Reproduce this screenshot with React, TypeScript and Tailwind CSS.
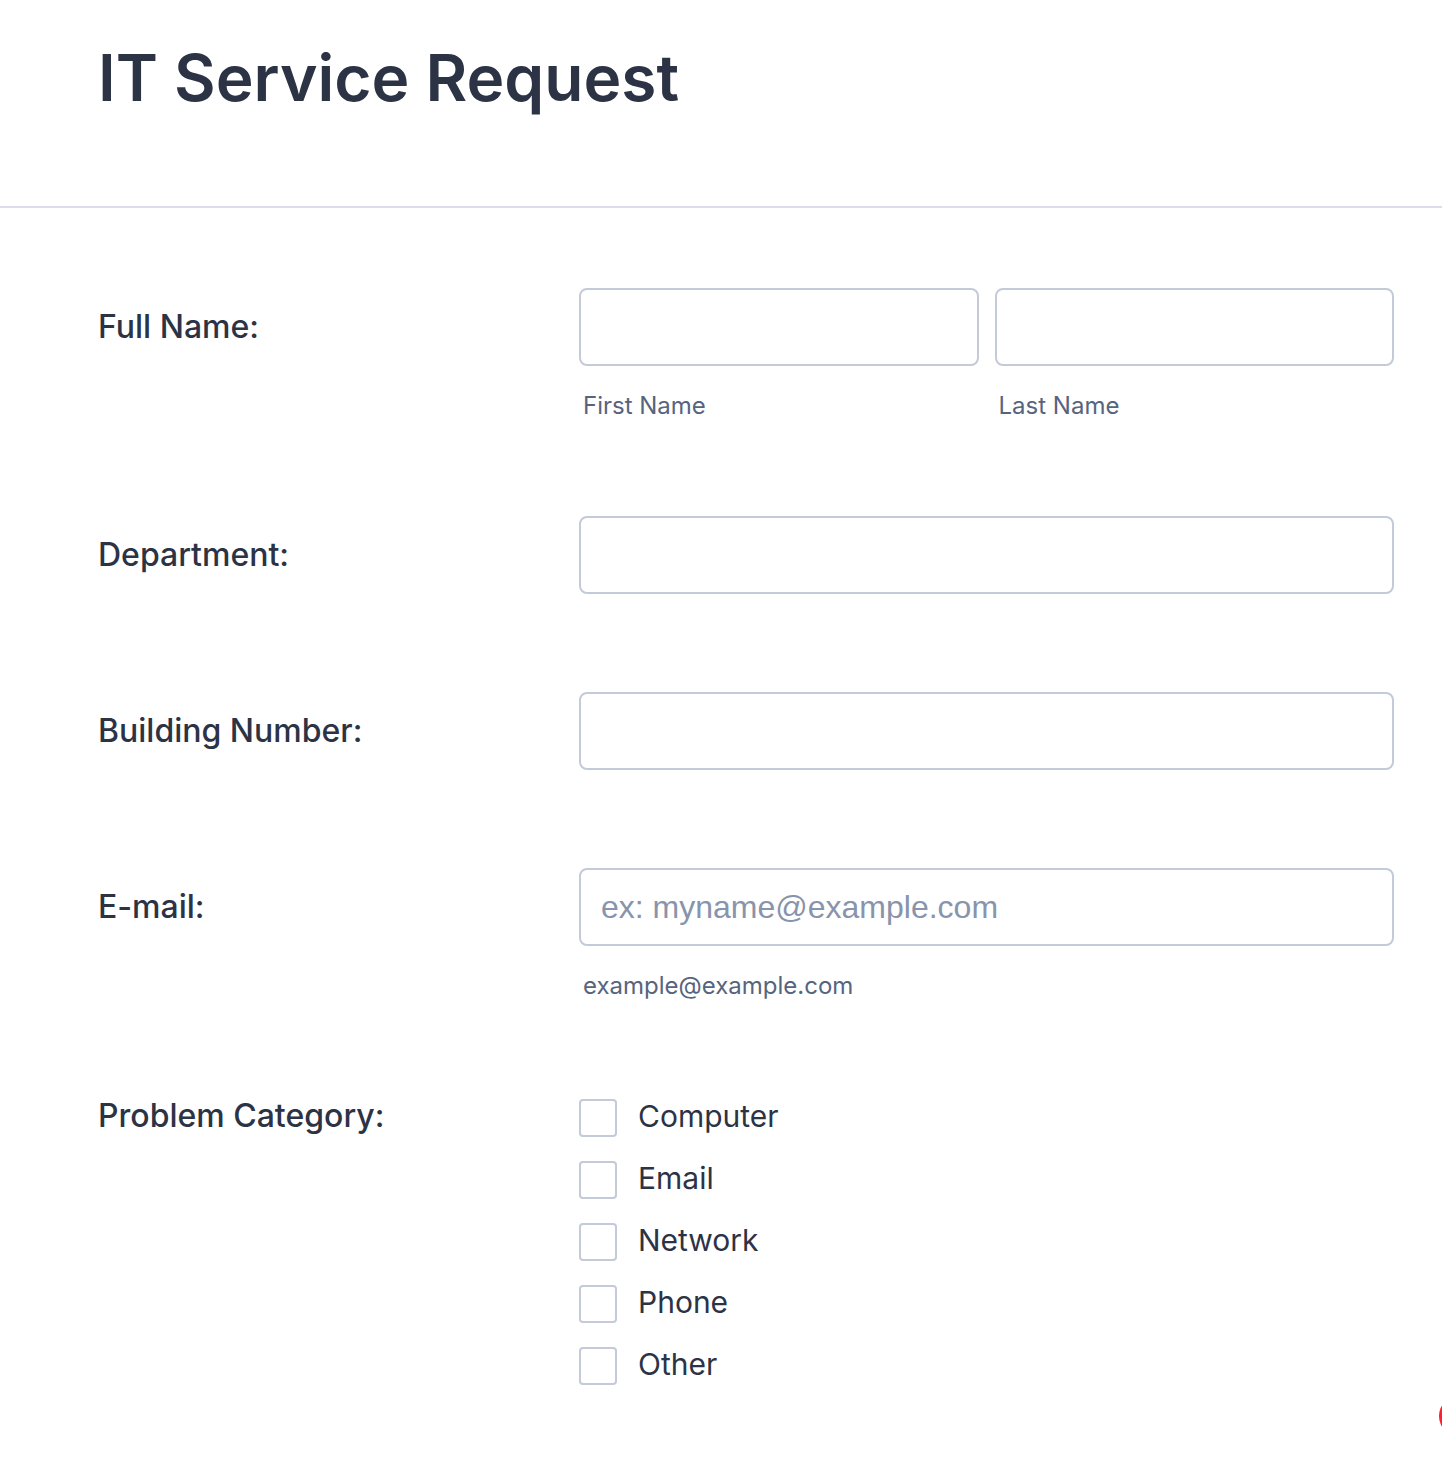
import React from "react";

const inter = { fontFamily: "Inter, 'Noto Sans', sans-serif" };

function Label({ children, h = "h-[78px]" }: { children: React.ReactNode; h?: string }) {
  return (
    <div className={`w-[481px] shrink-0 flex items-center ${h} text-[32px] font-medium text-[#2c3345]`}>
      {children}
    </div>
  );
}

function Input({ placeholder }: { placeholder?: string }) {
  return (
    <input
      placeholder={placeholder}
      className="w-full h-[78px] rounded-[8px] border-2 border-[#c3cad8] bg-white px-[20px] text-[32px] text-[#2c3345] placeholder:text-[#8894ab] outline-none"
      style={{ fontFamily: "'Liberation Sans', Arial, sans-serif" }}
    />
  );
}

function Sub({ children }: { children: React.ReactNode }) {
  return <div className="mt-[25px] h-[27px] leading-[30px] pl-[4px] text-[24px] text-[#57647e]">{children}</div>;
}

export default function App() {
  const cats = ["Computer", "Email", "Network", "Phone", "Other"];
  return (
    <div className="relative min-h-[1476px] w-full bg-white overflow-hidden" style={inter}>
      <header className="px-[98px] pt-[38px] pb-[88px]">
        <h1 className="text-[64px] leading-[80px] font-semibold text-[#2c3345] tracking-[0px]">IT Service Request</h1>
      </header>
      <div className="h-[2px] bg-[#dcdde9]" />
      <div className="pl-[98px] pr-[48px] pt-[80px] flex flex-col gap-[98px]">
        <div className="flex">
          <Label>Full Name:</Label>
          <div className="flex-1 flex gap-[16px]">
            <div className="flex-1">
              <Input />
              <Sub>First Name</Sub>
            </div>
            <div className="flex-1">
              <Input />
              <Sub>Last Name</Sub>
            </div>
          </div>
        </div>
        <div className="flex">
          <Label>Department:</Label>
          <div className="flex-1">
            <Input />
          </div>
        </div>
        <div className="flex">
          <Label>Building Number:</Label>
          <div className="flex-1">
            <Input />
          </div>
        </div>
        <div className="flex">
          <Label>E-mail:</Label>
          <div className="flex-1">
            <Input placeholder="ex: myname@example.com" />
            <Sub>example@example.com</Sub>
          </div>
        </div>
        <div className="flex items-start">
          <Label h="h-[40px]">Problem Category:</Label>
          <div className="flex-1 flex flex-col gap-[24px] pt-[3px]">
            {cats.map((c) => (
              <label key={c} className="flex items-center gap-[21px] h-[38px]">
                <span className="w-[38px] h-[38px] rounded-[4px] border-2 border-[#c3cad8] bg-white shrink-0" />
                <span className="text-[30px] leading-[38px] pb-[5px] text-[#2c3345]">{c}</span>
              </label>
            ))}
          </div>
        </div>
      </div>
      <div className="absolute left-[1439px] top-[1396px] w-[40px] h-[40px] rounded-full bg-[#ff1f2d]" />
    </div>
  );
}
